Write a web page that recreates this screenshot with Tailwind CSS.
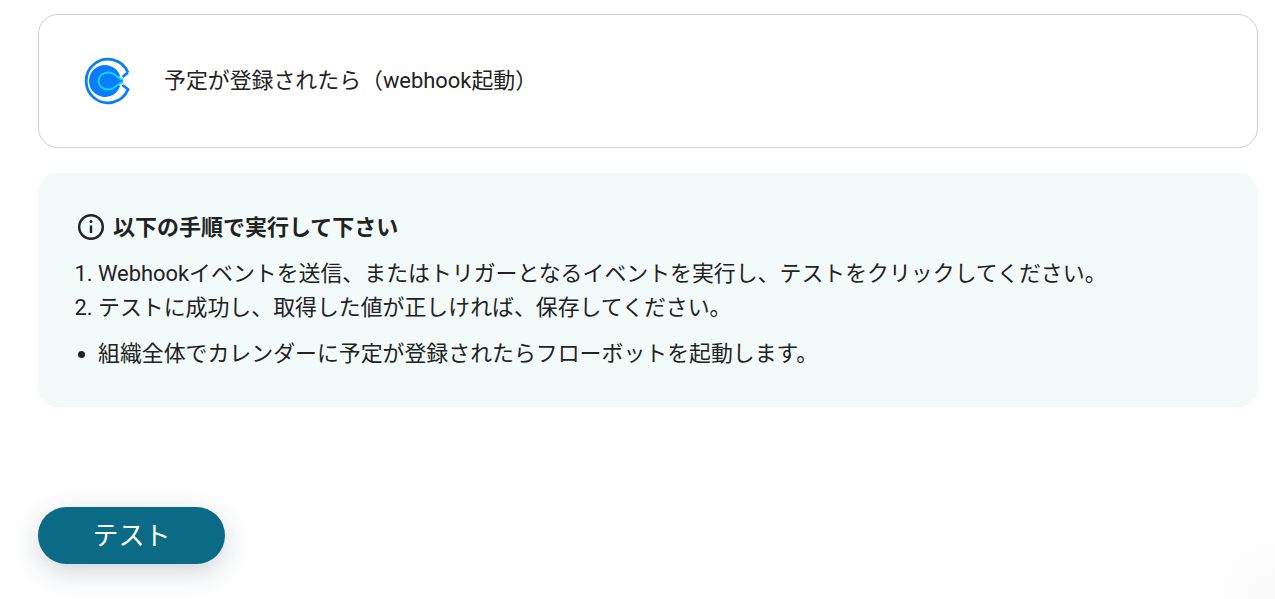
<!DOCTYPE html>
<html lang="ja">
	<head>
		<meta charset="UTF-8" />
		<meta name="viewport" content="width=device-width, initial-scale=1.0" />
		<title>テスト</title>
		<script src="https://cdn.jsdelivr.net/npm/@tailwindcss/browser@4"></script>
	</head>
	<body class="bg-white text-[#222] font-['Roboto','Noto_Sans_CJK_JP',sans-serif] overflow-hidden">
		<div class="h-[599px] pt-[14px] pl-[38px] pr-[17px] bg-[radial-gradient(circle_at_100%_100%,#f9f9f9,#ffffff_70px)]">
			<!-- trigger card -->
			<div class="h-[134px] flex items-center pl-[44px] gap-[33px] bg-white border border-[#cfcfcf] rounded-[20px]">
				<svg class="w-[48px] h-[48px]" viewBox="0 0 48 48" fill="none">
					<path d="M45 15.5A21.8 21.8 0 1 0 45 32.5L39.5 28M39.5 20 45 15.5" stroke="#0a7cff" stroke-width="2.8" />
					<path d="M37 18.5A16 16 0 1 0 37 29.5C35 27 37 25.5 40 25.5V22.5C37 22.5 35 21 37 18.5Z" fill="#0a7cff" />
					<path d="M40 22.5C34.5 22.5 33 15.5 25.5 15.5 19.5 15.5 15.5 19.5 15.5 24S19.5 32.5 25.5 32.5C33 32.5 34.5 25.5 40 25.5" stroke="#12d6f0" stroke-width="2" />
				</svg>
				<p class="text-[21.9px] whitespace-nowrap">予定が登録されたら（webhook起動）</p>
			</div>

			<!-- help panel -->
			<div class="mt-[25px] h-[234px] pt-[40px] pl-[39px] bg-[#f2fbfa] rounded-[20px]">
				<div class="flex items-center gap-[8px] h-[28px]">
					<svg class="w-[28px] h-[28px]" viewBox="0 0 28 28" fill="none" stroke="#222" stroke-width="2.4">
						<circle cx="14" cy="14" r="11.8" />
						<path d="M14 12.5V20" />
						<circle cx="14" cy="8.6" r="1.5" fill="#222" stroke="none" />
					</svg>
					<p class="text-[22px] font-bold">以下の手順で実行して下さい</p>
				</div>
				<ol class="mt-[16px] text-[21.9px] leading-[34px] list-decimal pl-[21px]">
					<li>Webhookイベントを送信、またはトリガーとなるイベントを実行し、テストをクリックしてください。</li>
					<li>テストに成功し、取得した値が正しければ、保存してください。</li>
				</ol>
				<ul class="mt-[12px] text-[21.9px] leading-[34px] list-disc pl-[21px]">
					<li>組織全体でカレンダーに予定が登録されたらフローボットを起動します。</li>
				</ul>
			</div>

			<button class="mt-[100px] w-[187px] h-[57px] pt-[2px] bg-[#0b6a85] text-white text-[26px] font-normal rounded-full shadow-[0_8px_28px_rgba(20,50,70,0.2)]">テスト</button>
		</div>
	</body>
</html>
